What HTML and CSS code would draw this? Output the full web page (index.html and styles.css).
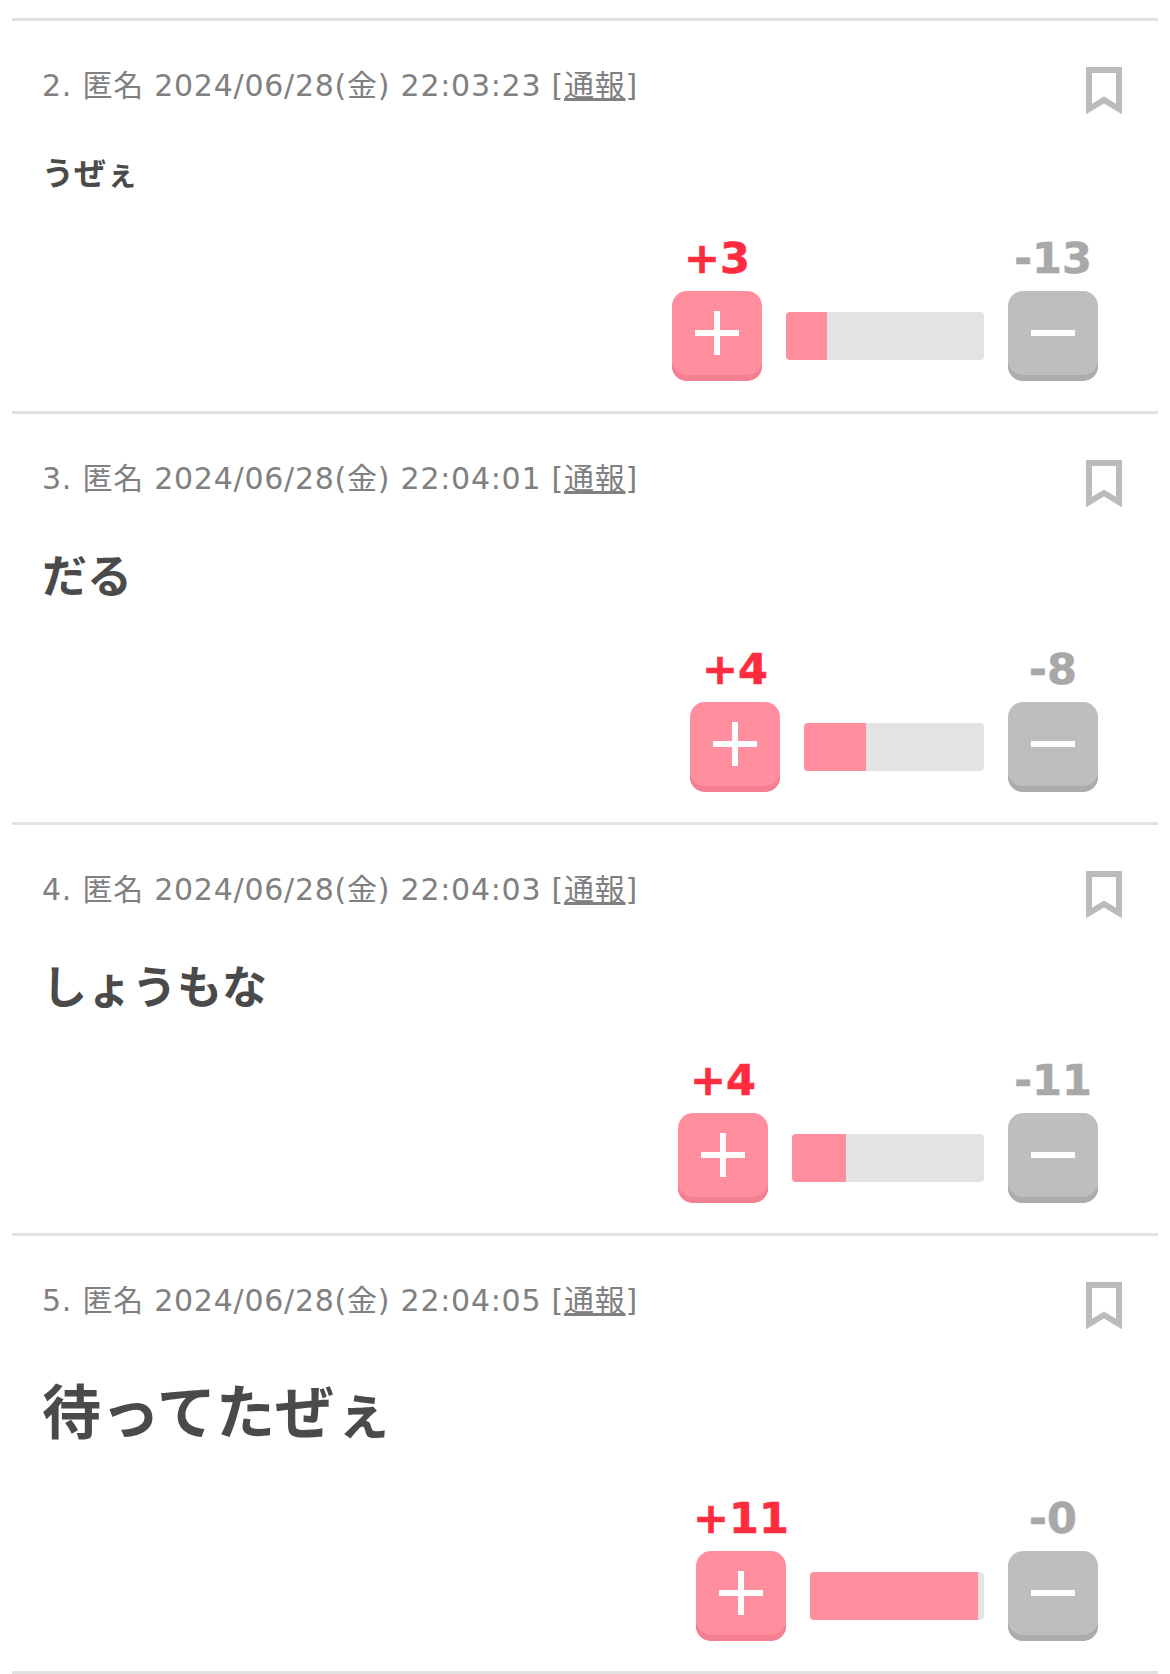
FILE: index.html
```html
<!DOCTYPE html>
<html lang="ja">
<head>
  <meta charset="UTF-8">
  <title>コメント</title>
  <link rel="stylesheet" href="styles.css">
</head>
<body>

<ul class="comments">
  <li class="comment">
    <div class="comment-head">
      <p class="meta">2. 匿名 2024/06/28(金) 22:03:23 [<a href="#">通報</a>]</p>
      <svg class="bookmark" viewBox="0 0 36 47"><path d="M3 3H33V42L18 33L3 42Z"/></svg>
    </div>
    <p class="text text-s">うぜぇ</p>
    <div class="votes">
      <div class="vote vote-plus">
        <span class="count">+3</span>
        <button class="btn"><svg viewBox="0 0 44 44"><path d="M0 22H44M22 0V44"/></svg></button>
      </div>
      <div class="bar" style="width:198px"><div class="bar-fill" style="width:41px"></div></div>
      <div class="vote vote-minus">
        <span class="count">-13</span>
        <button class="btn"><svg viewBox="0 0 44 44"><path d="M0 22H44"/></svg></button>
      </div>
    </div>
  </li>

  <li class="comment">
    <div class="comment-head">
      <p class="meta">3. 匿名 2024/06/28(金) 22:04:01 [<a href="#">通報</a>]</p>
      <svg class="bookmark" viewBox="0 0 36 47"><path d="M3 3H33V42L18 33L3 42Z"/></svg>
    </div>
    <p class="text text-m">だる</p>
    <div class="votes">
      <div class="vote vote-plus">
        <span class="count">+4</span>
        <button class="btn"><svg viewBox="0 0 44 44"><path d="M0 22H44M22 0V44"/></svg></button>
      </div>
      <div class="bar" style="width:180px"><div class="bar-fill" style="width:62px"></div></div>
      <div class="vote vote-minus">
        <span class="count">-8</span>
        <button class="btn"><svg viewBox="0 0 44 44"><path d="M0 22H44"/></svg></button>
      </div>
    </div>
  </li>

  <li class="comment">
    <div class="comment-head">
      <p class="meta">4. 匿名 2024/06/28(金) 22:04:03 [<a href="#">通報</a>]</p>
      <svg class="bookmark" viewBox="0 0 36 47"><path d="M3 3H33V42L18 33L3 42Z"/></svg>
    </div>
    <p class="text text-m">しょうもな</p>
    <div class="votes">
      <div class="vote vote-plus">
        <span class="count">+4</span>
        <button class="btn"><svg viewBox="0 0 44 44"><path d="M0 22H44M22 0V44"/></svg></button>
      </div>
      <div class="bar" style="width:192px"><div class="bar-fill" style="width:54px"></div></div>
      <div class="vote vote-minus">
        <span class="count">-11</span>
        <button class="btn"><svg viewBox="0 0 44 44"><path d="M0 22H44"/></svg></button>
      </div>
    </div>
  </li>

  <li class="comment">
    <div class="comment-head">
      <p class="meta">5. 匿名 2024/06/28(金) 22:04:05 [<a href="#">通報</a>]</p>
      <svg class="bookmark" viewBox="0 0 36 47"><path d="M3 3H33V42L18 33L3 42Z"/></svg>
    </div>
    <p class="text text-l">待ってたぜぇ</p>
    <div class="votes">
      <div class="vote vote-plus">
        <span class="count">+11</span>
        <button class="btn"><svg viewBox="0 0 44 44"><path d="M0 22H44M22 0V44"/></svg></button>
      </div>
      <div class="bar" style="width:174px"><div class="bar-fill" style="width:168px"></div></div>
      <div class="vote vote-minus">
        <span class="count">-0</span>
        <button class="btn"><svg viewBox="0 0 44 44"><path d="M0 22H44"/></svg></button>
      </div>
    </div>
  </li>
</ul>

</body>
</html>
```

FILE: styles.css
```css
/* Global styles */
body {
  font-family: "DejaVu Sans", "Noto Sans CJK JP", sans-serif;
  margin: 0;
  padding: 0;
  background: #fff;
  color: #4a4a4a;
}

.comments {
  list-style: none;
  margin: 0 12px;
  padding: 18px 0 0;
}

.comment {
  border-top: 3px solid #e2e2e2;
  padding-bottom: 30px;
}

.comment:last-child {
  border-bottom: 3px solid #e2e2e2;
}

/* Head row */
.comment-head {
  display: flex;
  justify-content: space-between;
  align-items: flex-start;
  padding: 46px 36px 0 30px;
}

.meta {
  margin: 0;
  font-size: 30px;
  letter-spacing: 0.75px;
  line-height: 38px;
  color: #808080;
}

.meta a {
  color: #808080;
}

.bookmark {
  width: 36px;
  height: 47px;
  flex-shrink: 0;
}

.bookmark path {
  fill: none;
  stroke: #bbb;
  stroke-width: 6;
}

/* Comment text */
.text {
  margin: 39px 0 0;
  padding-left: 30px;
  font-weight: bold;
}

.text-s {
  font-size: 32px;
  line-height: 42px;
}

.text-m {
  font-size: 45px;
  line-height: 56px;
  padding-top: 4px;
}

.text-l {
  font-size: 59px;
  line-height: 83px;
  padding-top: 4px;
}

/* Votes */
.votes {
  display: flex;
  justify-content: flex-end;
  align-items: flex-end;
  gap: 24px;
  margin-top: 40px;
  padding-right: 60px;
}

.vote {
  display: flex;
  flex-direction: column;
  align-items: center;
  width: 90px;
}

.count {
  font-size: 43px;
  font-weight: bold;
  line-height: 46px;
  margin-bottom: 10px;
  white-space: nowrap;
  -webkit-text-stroke: 0.6px currentColor;
}

.btn {
  display: flex;
  justify-content: center;
  align-items: center;
  width: 90px;
  height: 90px;
  border: 0;
  border-radius: 15px;
  padding: 0 0 6px;
}

.btn svg {
  width: 44px;
  height: 44px;
}

.btn path {
  fill: none;
  stroke: #fff;
  stroke-width: 6;
}

.vote-plus .count {
  color: #ff2b3e;
}

.vote-plus .btn {
  background: #ff8f9f;
  box-shadow: inset 0 -6px 0 #f47f92;
}

.vote-minus .count {
  color: #a8a8a8;
}

.vote-minus .btn {
  background: #bebebe;
  box-shadow: inset 0 -6px 0 #acacac;
}

.bar {
  height: 48px;
  margin-bottom: 21px;
  background: #e3e3e3;
  border-radius: 4px;
  overflow: hidden;
}

.bar-fill {
  height: 100%;
  background: #ff8f9f;
}
```
